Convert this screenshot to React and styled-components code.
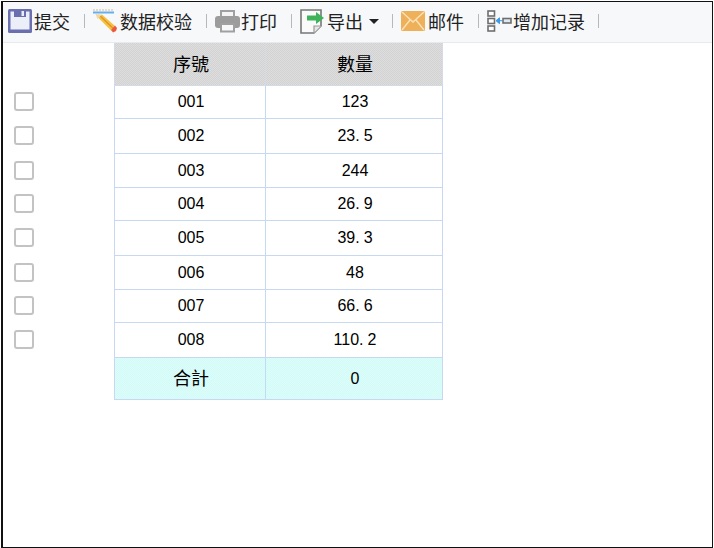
import React from "react";
import styled, { createGlobalStyle } from "styled-components";

const GlobalStyle = createGlobalStyle`
  html, body { margin: 0; padding: 0; background: #fff; }
  body { font-family: "Liberation Sans", "Noto Sans CJK SC", sans-serif; }
`;

const rows = [
  ["001", "123", 33],
  ["002", "23.5", 35],
  ["003", "244", 34],
  ["004", "26.9", 33],
  ["005", "39.3", 35],
  ["006", "48", 34],
  ["007", "66.6", 33],
  ["008", "110.2", 35],
];

const SaveIcon = () => (
  <svg width="24" height="24" viewBox="0 0 24 24">
    <rect x="0" y="0" width="24" height="24" rx="1.5" fill="#6a6fb0" />
    <rect x="2.5" y="2.5" width="19" height="18" fill="#eceef8" />
    <rect x="6" y="0" width="12" height="8" fill="#6a6fb0" />
    <rect x="13.5" y="2" width="2.5" height="5" fill="#eceef8" />
  </svg>
);

const CheckIcon = () => (
  <svg width="24" height="24" viewBox="0 0 24 24">
    <path d="M0 1h21" stroke="#d9b98c" strokeWidth="1" strokeDasharray="2 1" />
    <path d="M0 3.5h21" stroke="#63b0ee" strokeWidth="2" />
    <path d="M4.5 8 L9 5.5 L22 17 L18 21.5 Z" fill="#f4c23f" />
    <path d="M7 6.8 L20 19.2" stroke="#e0932c" strokeWidth="1.2" />
    <path d="M2.5 5 L9 5.5 L4.5 10 Z" fill="#ecd9ab" />
    <path d="M18 21 L22 16.5 L24 19 L23 22 L20 23.5 Z" fill="#ea5a3c" />
  </svg>
);

const PrintIcon = () => (
  <svg width="25" height="24" viewBox="0 0 25 24">
    <path d="M6 2h13v6H6z" fill="#f4f4f4" stroke="#a0a0a0" strokeWidth="2" />
    <rect x="0" y="7" width="25" height="12" rx="3" fill="#9c9c9c" />
    <rect x="6" y="15" width="13" height="7.5" fill="#f7f8fa" stroke="#a0a0a0" strokeWidth="2" />
  </svg>
);

const ExportIcon = () => (
  <svg width="24" height="25" viewBox="0 0 24 25">
    <path d="M1 1h20v16l-7 7H1z" fill="#fafafa" stroke="#777" strokeWidth="1.6" />
    <path d="M14 24v-7h7" fill="#e6e6e6" stroke="#9a9a9a" strokeWidth="1.2" />
    <path d="M7 6.5h9V3l8 6-8 6v-3.5H7z" fill="#3fb35a" />
  </svg>
);

const MailIcon = () => (
  <svg width="24" height="20" viewBox="0 0 24 20">
    <rect x="0" y="0" width="24" height="20" rx="1.5" fill="#eeb058" />
    <path d="M1 1l11 10L23 1M1 19l8-10M23 19l-8-10" fill="none" stroke="#fbe2ba" strokeWidth="1.4" />
  </svg>
);

const AddFieldIcon = () => (
  <svg width="25" height="22" viewBox="0 0 25 22">
    <g fill="#fff" stroke="#6e6e6e" strokeWidth="1.6">
      <rect x="1" y="1" width="6.5" height="5" />
      <rect x="1" y="8.5" width="6.5" height="5" />
      <rect x="1" y="16" width="6.5" height="5" />
      <rect x="16" y="8.5" width="8" height="4.5" fill="#dbe9f5" />
    </g>
    <path d="M15 10.7H12M12.5 7.8L9 10.7l3.5 3z" fill="#3c9be8" stroke="#3c9be8" />
  </svg>
);

const Frame = styled.div`
  box-sizing: border-box;
  width: 712px;
  height: 547px;
  margin: 1px 0 0 1px;
  border: 1px solid #111;
  border-left-width: 2px;
  background: #fff;
  overflow: hidden;
`;

const Toolbar = styled.div`
  display: flex;
  align-items: center;
  height: 41px;
  box-sizing: border-box;
  padding: 0 0 2px 5px;
  background: #f7f8fa;
  border-bottom: 1px solid #e6e9ee;
  border-top-left-radius: 4px;
`;

const ToolItem = styled.div`
  display: flex;
  align-items: center;
  gap: ${(p) => p.$gap}px;
  margin-right: ${(p) => p.$space ?? 14}px;
  font-size: 18px;
  color: #222;
  white-space: nowrap;
`;

const Sep = styled.span`
  width: 1px;
  height: 14px;
  background: #b5b8bc;
  margin-right: 8px;
`;

const Caret = styled.span`
  width: 0;
  height: 0;
  margin-left: 3px;
  border-left: 5px solid transparent;
  border-right: 5px solid transparent;
  border-top: 5px solid #222;
`;

const Grid = styled.div`
  display: grid;
  grid-template-columns: 111px 152px 177px;
  width: 440px;
`;

const CheckCell = styled.div`
  box-sizing: border-box;
  height: ${(p) => p.$h}px;
  display: flex;
  align-items: center;
  padding: 0 0 2px 11px;
`;

const CheckBox = styled.span`
  display: block;
  box-sizing: border-box;
  width: 20px;
  height: 19px;
  border: 2px solid #c3c3c3;
  border-radius: 3px;
  background: #fff;
`;

const Cell = styled.div`
  box-sizing: border-box;
  height: ${(p) => p.$h}px;
  display: flex;
  align-items: center;
  justify-content: center;
  padding-left: 2px;
  font-size: 16px;
  color: #000;
  border-right: 1px solid #c6d9f1;
  border-bottom: 1px solid #c6d9f1;
  border-left: ${(p) => (p.$first ? "1px solid #c6d9f1" : "0")};
  background: #fff;
`;

const HeadCell = styled(Cell)`
  font-size: 18px;
  padding-bottom: 2px;
  border-color: #d3dbe6;
  background: repeating-conic-gradient(#d2d2d2 0 25%, #dedede 0 50%) 0 0 / 2px 2px;
`;

const TotalCell = styled(Cell)`
  font-size: ${(p) => (p.$num ? 16 : 18)}px;
  padding-bottom: ${(p) => (p.$num ? 0 : 4)}px;
  background: repeating-conic-gradient(#d2fbf8 0 25%, #dcfdfa 0 50%) 0 0 / 2px 2px;
`;

const Dot = styled.span`
  margin-right: 4px;
`;

const Num = ({ value }) => {
  const [a, b] = value.split(".");
  if (b === undefined) return a;
  return (
    <>
      {a}
      <Dot>.</Dot>
      {b}
    </>
  );
};

export default function App() {
  return (
    <>
      <GlobalStyle />
      <Frame>
        <Toolbar>
          <ToolItem $gap={2}><SaveIcon />提交</ToolItem>
          <Sep />
          <ToolItem $gap={3}><CheckIcon />数据校验</ToolItem>
          <Sep />
          <ToolItem $gap={1}><PrintIcon />打印</ToolItem>
          <Sep />
          <ToolItem $gap={3} $space={13}><ExportIcon />导出<Caret /></ToolItem>
          <Sep />
          <ToolItem $gap={3}><MailIcon />邮件</ToolItem>
          <Sep />
          <ToolItem $gap={1} $space={13}><AddFieldIcon />增加记录</ToolItem>
          <Sep />
        </Toolbar>
        <Grid>
          <CheckCell $h={43} />
          <HeadCell $h={43} $first>序號</HeadCell>
          <HeadCell $h={43}>數量</HeadCell>
          {rows.map(([id, qty, h]) => (
            <React.Fragment key={id}>
              <CheckCell $h={h}><CheckBox /></CheckCell>
              <Cell $h={h} $first>{id}</Cell>
              <Cell $h={h}><Num value={qty} /></Cell>
            </React.Fragment>
          ))}
          <CheckCell $h={42} />
          <TotalCell $h={42} $first>合計</TotalCell>
          <TotalCell $h={42} $num>0</TotalCell>
        </Grid>
      </Frame>
    </>
  );
}
